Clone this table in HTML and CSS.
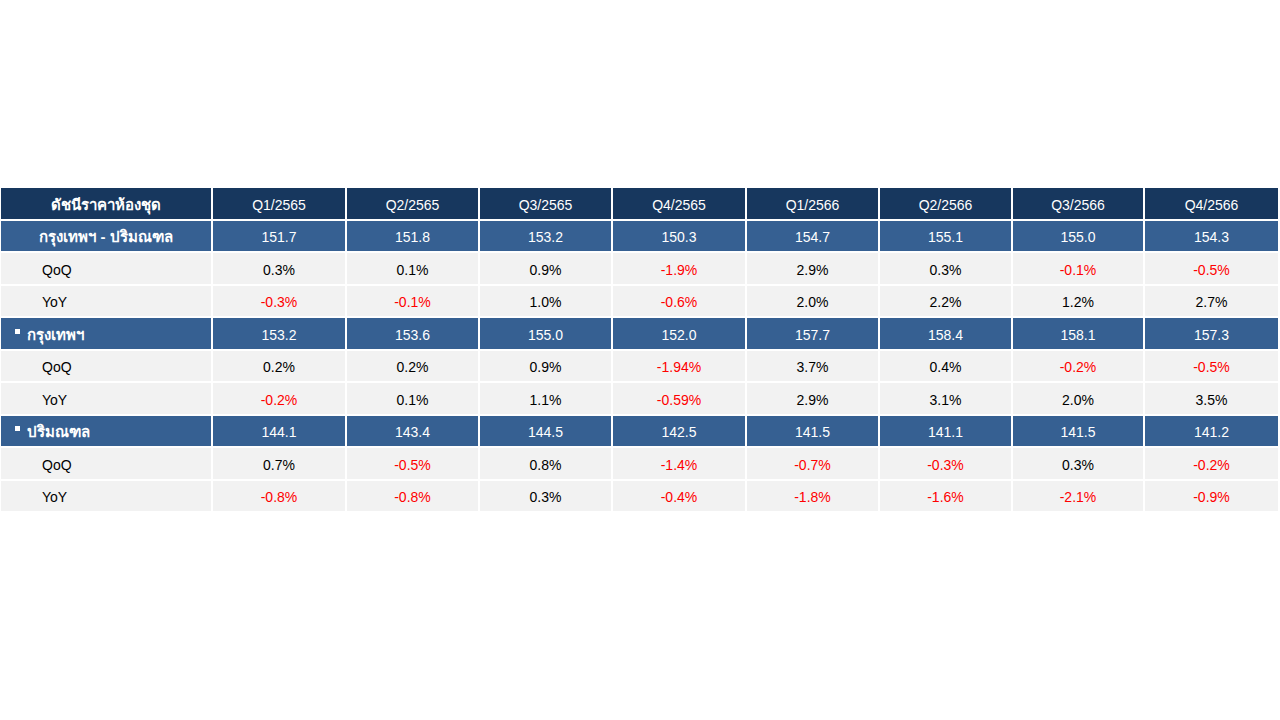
FILE: index.html
```html
<!DOCTYPE html>
<html lang="th">
<head>
<meta charset="utf-8">
<title>ดัชนีราคาห้องชุด</title>
<link rel="stylesheet" href="styles.css">
</head>
<body>
<main class="slide">
<table class="index-table">
  <colgroup>
    <col class="c1"><col class="c2"><col class="c3"><col class="c4"><col class="c5">
    <col class="c6"><col class="c7"><col class="c8"><col class="c9">
  </colgroup>
  <thead>
    <tr class="r-head">
      <th class="lbl center">ดัชนีราคาห้องชุด</th>
      <th>Q1/2565</th><th>Q2/2565</th><th>Q3/2565</th><th>Q4/2565</th>
      <th>Q1/2566</th><th>Q2/2566</th><th>Q3/2566</th><th>Q4/2566</th>
    </tr>
  </thead>
  <tbody>
    <tr class="r-group">
      <td class="lbl center">กรุงเทพฯ - ปริมณฑล</td>
      <td>151.7</td><td>151.8</td><td>153.2</td><td>150.3</td><td>154.7</td><td>155.1</td><td>155.0</td><td>154.3</td>
    </tr>
    <tr class="r-sub">
      <td class="lbl sub">QoQ</td>
      <td>0.3%</td><td>0.1%</td><td>0.9%</td><td class="neg">-1.9%</td><td>2.9%</td><td>0.3%</td><td class="neg">-0.1%</td><td class="neg">-0.5%</td>
    </tr>
    <tr class="r-sub">
      <td class="lbl sub">YoY</td>
      <td class="neg">-0.3%</td><td class="neg">-0.1%</td><td>1.0%</td><td class="neg">-0.6%</td><td>2.0%</td><td>2.2%</td><td>1.2%</td><td>2.7%</td>
    </tr>
    <tr class="r-group">
      <td class="lbl bullet"><span class="dot"></span>กรุงเทพฯ</td>
      <td>153.2</td><td>153.6</td><td>155.0</td><td>152.0</td><td>157.7</td><td>158.4</td><td>158.1</td><td>157.3</td>
    </tr>
    <tr class="r-sub">
      <td class="lbl sub">QoQ</td>
      <td>0.2%</td><td>0.2%</td><td>0.9%</td><td class="neg">-1.94%</td><td>3.7%</td><td>0.4%</td><td class="neg">-0.2%</td><td class="neg">-0.5%</td>
    </tr>
    <tr class="r-sub">
      <td class="lbl sub">YoY</td>
      <td class="neg">-0.2%</td><td>0.1%</td><td>1.1%</td><td class="neg">-0.59%</td><td>2.9%</td><td>3.1%</td><td>2.0%</td><td>3.5%</td>
    </tr>
    <tr class="r-group">
      <td class="lbl bullet"><span class="dot"></span>ปริมณฑล</td>
      <td>144.1</td><td>143.4</td><td>144.5</td><td>142.5</td><td>141.5</td><td>141.1</td><td>141.5</td><td>141.2</td>
    </tr>
    <tr class="r-sub">
      <td class="lbl sub">QoQ</td>
      <td>0.7%</td><td class="neg">-0.5%</td><td>0.8%</td><td class="neg">-1.4%</td><td class="neg">-0.7%</td><td class="neg">-0.3%</td><td>0.3%</td><td class="neg">-0.2%</td>
    </tr>
    <tr class="r-sub">
      <td class="lbl sub">YoY</td>
      <td class="neg">-0.8%</td><td class="neg">-0.8%</td><td>0.3%</td><td class="neg">-0.4%</td><td class="neg">-1.8%</td><td class="neg">-1.6%</td><td class="neg">-2.1%</td><td class="neg">-0.9%</td>
    </tr>
  </tbody>
</table>
</main>
</body>
</html>
```

FILE: styles.css
```css
html, body {
  margin: 0;
  padding: 0;
  background: #ffffff;
}

.slide {
  width: 1280px;
  height: 720px;
  box-sizing: border-box;
  padding: 188px 2px 0 1px;
  font-family: "Liberation Sans", Arial, "Noto Sans", sans-serif;
  font-size: 14px;
  color: #000000;
}

.index-table {
  width: 1277px;
  table-layout: fixed;
  border-collapse: separate;
  border-spacing: 0;
}

.c1 { width: 212px; }
.c2 { width: 134px; }
.c3 { width: 133px; }
.c4 { width: 133px; }
.c5 { width: 134px; }
.c6 { width: 133px; }
.c7 { width: 133px; }
.c8 { width: 132px; }
.c9 { width: 133px; }

.index-table th,
.index-table td {
  height: 27.5px;
  padding: 3px 0 0 0;
  text-align: center;
  vertical-align: middle;
  border-right: 2px solid #ffffff;
  border-bottom: 2px solid #ffffff;
  font-weight: normal;
  white-space: nowrap;
}

.index-table tr > :last-child { border-right: 0; }

.r-head th {
  background: #17375e;
  color: #ffffff;
}

.r-group td {
  background: #366092;
  color: #ffffff;
}

.r-sub td {
  background: #f2f2f2;
  color: #000000;
}

.index-table td.neg { color: #ff0000; }

.lbl.center {
  font-size: 15px;
  font-weight: bold;
}

.lbl.bullet {
  text-align: left;
  padding-left: 14px;
  font-size: 15px;
  font-weight: bold;
}

.dot {
  display: inline-block;
  width: 5px;
  height: 5px;
  background: #ffffff;
  margin-right: 7px;
  vertical-align: 6px;
}

.lbl.sub {
  text-align: left;
  padding-left: 41px;
}
```
